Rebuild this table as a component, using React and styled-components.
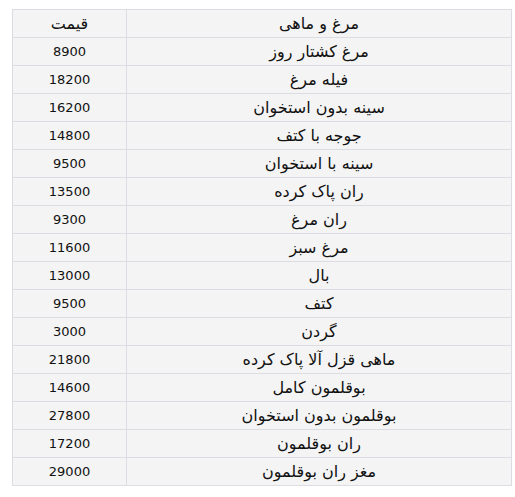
import styled, { createGlobalStyle } from "styled-components";

const GlobalStyle = createGlobalStyle`
  body {
    margin: 0;
    background: #fff;
    font-family: "DejaVu Sans", "Noto Sans", sans-serif;
  }
`;

const Page = styled.div`
  padding: 9px 4px 0 12px;
`;

const Table = styled.table`
  width: 500px;
  border-collapse: collapse;
  direction: rtl;
  background: #f4f4f4;
  color: #111;
`;

// names are Persian script, DejaVu's Arabic glyphs run small so they get a bigger size
const Cell = styled.td`
  height: 27px;
  padding: 0;
  text-align: center;
  border: 1px solid #dcdce3;
  font-size: ${(p) => (p.$num ? "13px" : "16px")};
  width: ${(p) => (p.$price ? "113px" : "auto")};
`;

const items = [
  ["مرغ و ماهی", "قیمت"],
  ["مرغ کشتار روز", "8900"],
  ["فیله مرغ", "18200"],
  ["سینه بدون استخوان", "16200"],
  ["جوجه با کتف", "14800"],
  ["سینه با استخوان", "9500"],
  ["ران پاک کرده", "13500"],
  ["ران مرغ", "9300"],
  ["مرغ سبز", "11600"],
  ["بال", "13000"],
  ["کتف", "9500"],
  ["گردن", "3000"],
  ["ماهی قزل آلا پاک کرده", "21800"],
  ["بوقلمون کامل", "14600"],
  ["بوقلمون بدون استخوان", "27800"],
  ["ران بوقلمون", "17200"],
  ["مغز ران بوقلمون", "29000"],
];

export default function App() {
  return (
    <Page>
      <GlobalStyle />
      <Table>
        <tbody>
          {items.map(([name, price], i) => (
            <tr key={name}>
              <Cell>{name}</Cell>
              <Cell $price $num={i > 0}>
                {price}
              </Cell>
            </tr>
          ))}
        </tbody>
      </Table>
    </Page>
  );
}
